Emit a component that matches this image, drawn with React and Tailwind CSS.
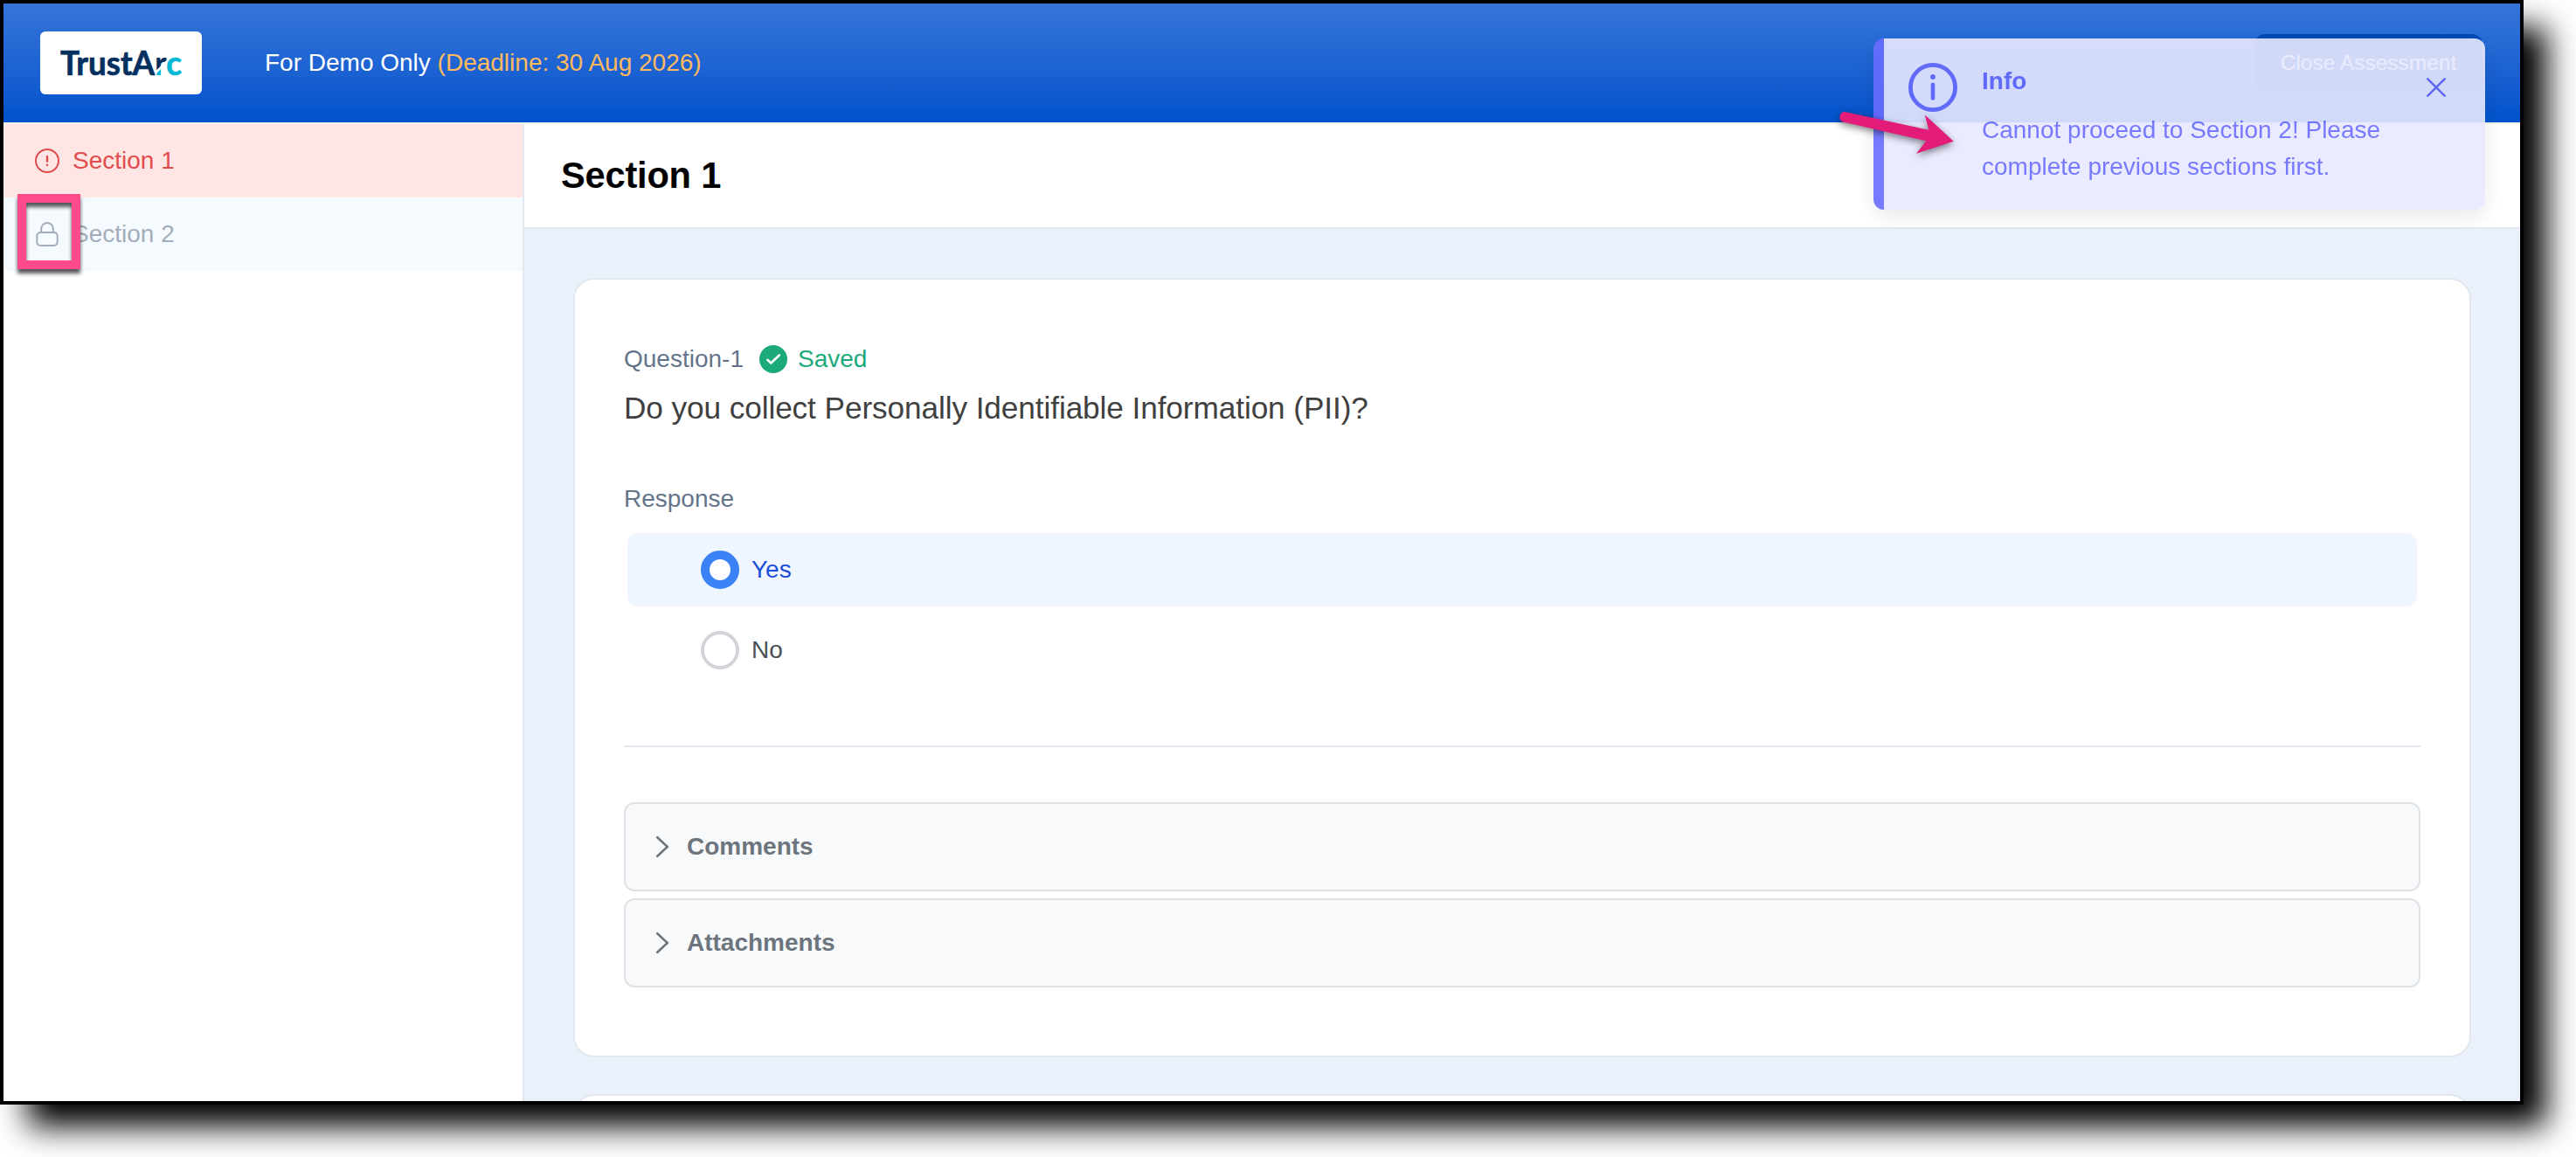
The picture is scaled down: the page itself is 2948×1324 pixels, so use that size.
const Logo = () => (
  <svg width="185" height="72" viewBox="0 0 185 72" className="block">
    <defs>
      <linearGradient id="rfill" gradientUnits="userSpaceOnUse" x1="131" y1="34" x2="144" y2="47">
        <stop offset="0.46" stopColor="#04305f" />
        <stop offset="0.5" stopColor="#fff" />
        <stop offset="0.6" stopColor="#fff" />
        <stop offset="0.64" stopColor="#00b7d4" />
      </linearGradient>
    </defs>
    <text x="23" y="49.5" fontSize="38" fontWeight="700" fontFamily="Lato, sans-serif" fill="#04305f" stroke="#04305f" strokeWidth="0.7" textLength="139" lengthAdjust="spacingAndGlyphs">
      TrustA<tspan fill="url(#rfill)" stroke="none">r</tspan><tspan fill="#00b7d4" stroke="#00b7d4">c</tspan>
    </text>
  </svg>
);

const AlertIcon = () => (
  <svg width="28" height="28" viewBox="0 0 28 28" fill="none" stroke="currentColor" strokeWidth="2">
    <circle cx="14" cy="14" r="13" />
    <path d="M14 9v5.500" strokeLinecap="round" strokeWidth="2.400" />
    <circle cx="14" cy="18.800" r="1.300" fill="currentColor" stroke="none" />
  </svg>
);

const LockIcon = () => (
  <svg width="28" height="28" viewBox="0 0 28 28" fill="none" stroke="currentColor" strokeWidth="2">
    <rect x="2.300" y="12" width="23.400" height="15" rx="4" />
    <path d="M7.200 12V7.800a6.800 6.800 0 0 1 13.600 0v4.200" />
  </svg>
);

const Panel = ({ label }) => (
  <div className="flex h-[102px] items-center rounded-xl border-2 border-[#dee2e6] bg-[#f8f9fa] pl-[28px] text-[28px] font-bold text-[#6c757d]">
    <svg width="28" height="28" viewBox="0 0 28 28" fill="none" stroke="currentColor" strokeWidth="2.600" strokeLinecap="round" strokeLinejoin="round">
      <path d="M8.300 3.200L19.800 14L8.300 24.800" />
    </svg>
    <span className="ml-[14px]">{label}</span>
  </div>
);

export default function App() {
  return (
    <div className="h-[1324px] w-[2948px] overflow-hidden bg-white font-['Liberation_Sans',Arial,sans-serif] text-[28px] leading-[42px]">
      <div className="relative h-[1264px] w-[2888px] border-4 border-black bg-white shadow-[29px_28px_34px_-3px_#000]">
        <div className="flex h-full flex-col overflow-hidden">
          <header className="flex h-[136px] shrink-0 items-center bg-gradient-to-b from-[#3575d9] to-[#0052cc] pl-[42px] pr-[43px]">
            <div className="h-[72px] w-[185px] rounded-md bg-white"><Logo /></div>
            <div className="ml-[72px] whitespace-pre text-white">
              For Demo Only <span className="text-[#ffb95e]">(Deadline: 30 Aug 2026)</span>
            </div>
            <button className="ml-auto h-[66px] w-[261px] rounded-xl bg-[#0049b5] text-[24.5px] text-white">Close Assessment</button>
          </header>
          <div className="h-[2px] shrink-0 bg-[#f0f0f0]" />
          <div className="flex min-h-0 flex-1">
            <nav className="w-[596px] shrink-0 border-r-2 border-[#e2e8f0]">
              <div className="flex h-[84px] items-center bg-[#ffe6e5] pl-[36px] text-[#e24c4c]">
                <AlertIcon /><span className="ml-[15px]">Section 1</span>
              </div>
              <div className="flex h-[84px] items-center bg-[#f5faff] pl-[36px] text-[#a3adba]">
                <LockIcon /><span className="ml-[15px]">Section 2</span>
              </div>
            </nav>
            <main className="flex min-w-0 flex-1 flex-col bg-[#eaf1fa]">
              <h1 className="flex h-[120px] shrink-0 items-center border-b-2 border-[#e2e8f0] bg-white pl-[42px] text-[41.6px] font-bold tracking-[-0.2px] text-black">Section 1</h1>
              <div className="flex flex-col gap-[42px] px-[56px] pt-[56px]">
                <section className="h-[892px] shrink-0 rounded-3xl border-2 border-[#e2e8f0] bg-white px-[56px] pt-[69px]">
                  <div className="flex h-[44px] items-center text-[#64748b]">
                    Question-1
                    <svg className="ml-[18px]" width="32" height="32" viewBox="0 0 32 32">
                      <circle cx="16" cy="16" r="16" fill="#1ca97c" />
                      <path d="M9.300 16.800L13.300 20.500L22.800 11.500" fill="none" stroke="#fff" strokeWidth="2.600" strokeLinecap="round" strokeLinejoin="round" />
                    </svg>
                    <span className="ml-[12px] text-[#1ca97c]">Saved</span>
                  </div>
                  <div className="mt-[8px] text-[35.2px] leading-[52px] tracking-[-0.085px] text-[#404040]">Do you collect Personally Identifiable Information (PII)?</div>
                  <div className="mt-[57px] text-[#64748b]">Response</div>
                  <div className="mx-[4px] mt-[18px]">
                    <div className="flex h-[84px] items-center rounded-xl bg-[#eff6ff] pl-[84px] text-[#1d4ed8]">
                      <span className="h-[44px] w-[44px] rounded-full border-[10px] border-[#3b82f6] bg-white" />
                      <span className="ml-[14px]">Yes</span>
                    </div>
                    <div className="mt-[8px] flex h-[84px] items-center pl-[84px] text-[#495057]">
                      <span className="h-[44px] w-[44px] rounded-full border-4 border-[#d1d5db] bg-white" />
                      <span className="ml-[14px]">No</span>
                    </div>
                  </div>
                  <div className="mt-[67px] h-[2px] bg-[#e2e8f0]" />
                  <div className="mt-[63px] flex flex-col gap-2">
                    <Panel label="Comments" />
                    <Panel label="Attachments" />
                  </div>
                </section>
                <section className="h-[200px] shrink-0 rounded-3xl border-2 border-[#e2e8f0] bg-white" />
              </div>
            </main>
          </div>
        </div>

        <div className="absolute left-[2140px] top-[40px] flex h-[196px] w-[700px] rounded-xl border-l-[12px] border-[#696cff] bg-[#e9e9ff] pl-[28px] text-[#696cff] opacity-90 shadow-[0_8px_24px_rgba(0,0,0,0.1)]">
          <svg className="mt-[28px]" width="56" height="56" viewBox="0 0 56 56" fill="none" stroke="currentColor">
            <circle cx="28" cy="28" r="25.600" strokeWidth="4.800" />
            <path d="M28 24.800V40.500" strokeWidth="4.600" strokeLinecap="round" />
            <circle cx="28" cy="16" r="2.900" fill="currentColor" stroke="none" />
          </svg>
          <div className="ml-[28px] mt-[28px] w-[480px]">
            <div className="font-bold">Info</div>
            <div className="mt-[14px]">Cannot proceed to Section 2! Please complete previous sections first.</div>
          </div>
          <svg className="ml-[29px] mt-[45px]" width="22" height="22" viewBox="0 0 22 22" stroke="currentColor" strokeWidth="2.600" strokeLinecap="round">
            <path d="M1.300 1.300L20.700 20.700M20.700 1.300L1.300 20.700" />
          </svg>
        </div>

        <svg className="absolute left-[2090px] top-[110px] overflow-visible" width="160" height="80" viewBox="2094 114 160 80">
          <path d="M2111.500 128L2207.300 148.700L2202.700 131.300L2235.700 161.700L2193 175.700L2204.300 161.300L2109 139.500A6 6 0 0 1 2111.500 128Z" fill="#e31c79" className="drop-shadow-[0_3px_4px_rgba(0,0,0,0.5)]" />
        </svg>

        <div className="absolute left-[16px] top-[218px] h-[86px] w-[72px] border-[10px] border-[#ff4b8b] drop-shadow-[0_5px_2px_rgba(0,0,0,0.65)]" />
      </div>
    </div>
  );
}
